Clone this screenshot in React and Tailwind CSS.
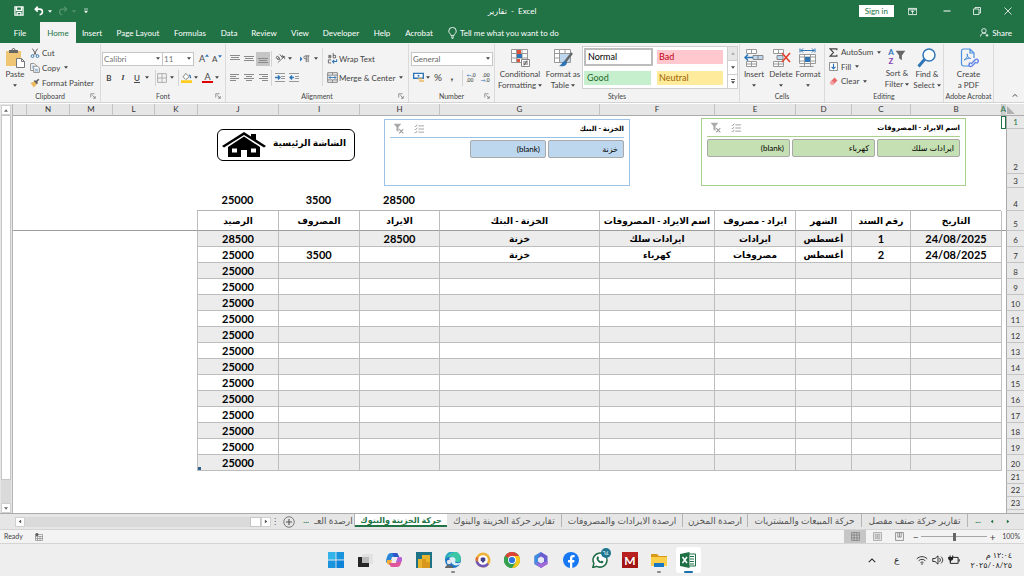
import { useState } from "react";

const COLUMNS = [
  { id: "A", width: "w-[5px]" },
  { id: "B", width: "w-[91px]", title: "التاريخ" },
  { id: "C", width: "w-[59px]", title: "رقم السند" },
  { id: "D", width: "w-[56px]", title: "الشهر" },
  { id: "E", width: "w-[81px]", title: "ايراد - مصروف" },
  { id: "F", width: "w-[115px]", title: "اسم الايراد - المصروفات" },
  { id: "G", width: "w-[160px]", title: "الخزنة - البنك" },
  { id: "H", width: "w-[80px]", title: "الايراد" },
  { id: "I", width: "w-[81px]", title: "المصروف" },
  { id: "J", width: "w-[81px]", title: "الرصيد" },
  { id: "K", width: "w-[43px]" },
  { id: "L", width: "w-[42px]" },
  { id: "M", width: "w-[43px]" },
  { id: "N", width: "w-[43px]" },
];

const FIELDS = ["B", "C", "D", "E", "F", "G", "H", "I", "J"];
const TEXT_FIELDS = ["D", "E", "F", "G"];

const entries = [
  { B: "24/08/2025", C: "1", D: "أغسطس", E: "ايرادات", F: "ايرادات سلك", G: "خزنة", H: "28500", J: "28500" },
  { B: "24/08/2025", C: "2", D: "أغسطس", E: "مصروفات", F: "كهرباء", G: "خزنة", I: "3500", J: "25000" },
];
while (entries.length < 15) entries.push({ J: "25000" });

const totals = { H: "28500", I: "3500", J: "25000" };

const ribbonTabs = [
  { name: "File", width: "w-10" },
  { name: "Home", width: "w-9" },
  { name: "Insert", width: "w-8" },
  { name: "Page Layout", width: "w-[60px]" },
  { name: "Formulas", width: "w-11" },
  { name: "Data", width: "w-[34px]" },
  { name: "Review", width: "w-9" },
  { name: "View", width: "w-9" },
  { name: "Developer", width: "w-[46px]" },
  { name: "Help", width: "w-9" },
  { name: "Acrobat", width: "w-[38px]" },
];

const sheets = [
  { name: "تقارير حركة صنف مفصل", width: "w-[106px]" },
  { name: "حركة المبيعات والمشتريات", width: "w-[114px]" },
  { name: "ارصدة المخزن", width: "w-[65px]" },
  { name: "ارصدة الايرادات والمصروفات", width: "w-[121px]" },
  { name: "تقارير حركة الخزينة والبنوك", width: "w-[115px]" },
  { name: "حركة الخزينة والبنوك", width: "w-[92px]", active: true },
  { name: "ارصدة العـ", width: "w-[42px]" },
];

function Caret({ className = "" }) {
  return (
    <svg viewBox="0 0 6 4" className={`h-[3px] w-1 shrink-0 ${className}`} aria-hidden="true">
      <path d="M0 0h6L3 4z" fill="currentColor" />
    </svg>
  );
}

function Icon({ box = "0 0 16 16", className = "size-3", children }) {
  return (
    <svg viewBox={box} className={`shrink-0 ${className}`} fill="none" stroke="currentColor" aria-hidden="true">
      {children}
    </svg>
  );
}

function Divider({ className = "" }) {
  return <span className={`h-4 w-px shrink-0 bg-[#d4d4d4] ${className}`} />;
}

function Group({ label, width, launcher, children }) {
  return (
    <section className={`flex shrink-0 flex-col border-r border-[#dadada] ${width}`} aria-label={label}>
      <div className="flex h-[46px]">{children}</div>
      <div className="relative h-3 text-center text-[7px] leading-3 whitespace-nowrap text-[#444]">
        {label}
        {launcher && (
          <button aria-label={`${label} settings`} className="absolute right-1 bottom-[3px]">
            <Icon box="0 0 8 8" className="size-[6px]">
              <path d="M1 6V1h5M3 3l4 4M7 4v3H4" stroke="#777" />
            </Icon>
          </button>
        )}
      </div>
    </section>
  );
}

function BigButton({ icon, lines, width, caret }) {
  return (
    <button className={`flex shrink-0 flex-col items-center pt-1 leading-[11px] whitespace-nowrap ${width}`}>
      <span className="mb-[2px] flex h-[19px] items-center">{icon}</span>
      {lines.map((line, i) => (
        <span key={line} className="flex items-center gap-[2px]">
          {line}
          {caret && lines.length > 1 && i === lines.length - 1 && <Caret />}
        </span>
      ))}
      {caret && lines.length === 1 && <Caret className="mt-1" />}
    </button>
  );
}

function SmallButton({ icon, label, caret, className = "" }) {
  return (
    <button className={`flex items-center whitespace-nowrap ${className}`}>
      <span className="flex w-3 shrink-0 items-center">{icon}</span>
      {label}
      {caret && <Caret className="ml-1" />}
    </button>
  );
}

function IconButton({ label, width = "w-[14px]", active, children }) {
  return (
    <button
      aria-label={label}
      className={`flex h-[14px] shrink-0 items-center justify-center ${width} ${active ? "bg-[#c5c5c5]" : ""}`}
    >
      {children}
    </button>
  );
}

function Lines({ d }) {
  return (
    <Icon box="0 0 10 10" className="size-[10px]">
      <path d={d} stroke="#8a8a8a" />
    </Icon>
  );
}

function TitleBar() {
  return (
    <header className="grid h-[22px] grid-cols-3 items-center">
      <div className="flex items-center pl-[14px]">
        <button aria-label="Save">
          <Icon className="size-[10px]">
            <path d="M1.500 1.500h13v13h-13zM4 2v5h8V2M5 14v-4h6v4" strokeWidth="2" />
          </Icon>
        </button>
        <button aria-label="Undo" className="ml-[10px] flex items-center gap-1">
          <Icon className="size-[10px]">
            <path d="M6 1 2 5l4 4M2 5h7c6 0 6 8 0 9" strokeWidth="2.500" />
          </Icon>
          <Caret />
        </button>
        <button aria-label="Redo" disabled className="ml-[6px] flex items-center gap-1 text-[#56936f]">
          <Icon className="size-[10px]">
            <path d="m10 1 4 4-4 4M14 5H7C1 5 1 13 7 14" strokeWidth="2" />
          </Icon>
          <Caret />
        </button>
        <button aria-label="Customize toolbar" className="ml-2">
          <Icon box="0 0 6 8" className="h-[6px] w-1">
            <path d="M0 1h6" />
            <path d="M0 3.500h6l-3 4z" fill="currentColor" stroke="none" />
          </Icon>
        </button>
      </div>
      <h1 className="text-center" dir="ltr">
        <bdi>تقارير</bdi>&nbsp; - &nbsp;Excel
      </h1>
      <div className="flex items-center justify-end">
        <button className="mr-[14px] h-3 bg-white px-[6px] leading-3 text-[#217346]">Sign in</button>
        <button aria-label="Ribbon display options" className="mr-[26px]">
          <Icon className="size-[9px]">
            <path d="M.500 2.500h15v11H.500zM.500 5h15M8 12V7M5.500 9 8 6.500 10.500 9" strokeWidth="1.500" />
          </Icon>
        </button>
        <button aria-label="Minimize" className="mr-[22px]">
          <Icon className="size-2"><path d="M1 8h14" strokeWidth="2" /></Icon>
        </button>
        <button aria-label="Restore" className="mr-[23px]">
          <Icon className="size-2"><path d="M1 4h11v11H1zM4 4V1h11v11h-3" strokeWidth="1.600" /></Icon>
        </button>
        <button aria-label="Close" className="mr-3">
          <Icon className="size-2"><path d="m1 1 14 14M15 1 1 15" strokeWidth="1.600" /></Icon>
        </button>
      </div>
    </header>
  );
}

function RibbonTabs({ tab, onSelect }) {
  return (
    <nav className="flex h-[21px] items-stretch">
      {ribbonTabs.map(({ name, width }) => (
        <button
          key={name}
          onClick={() => onSelect(name)}
          className={`shrink-0 whitespace-nowrap ${width} ${tab === name ? "bg-[#f3f3f3] text-[#217346]" : ""}`}
        >
          {name}
        </button>
      ))}
      <button className="ml-[10px] flex items-center gap-[3px] whitespace-nowrap">
        <Icon box="0 0 12 16" className="h-3 w-[9px]">
          <path d="M4 11.500c0-2.500-3-3-3-6a5 5 0 0 1 10 0c0 3-3 3.500-3 6zM4 13.500h4M5 15.500h2" strokeWidth="1.200" />
        </Icon>
        Tell me what you want to do
      </button>
      <button className="mr-3 ml-auto flex items-center gap-[3px]">
        <Icon className="size-[9px]">
          <circle cx="7" cy="5" r="4" strokeWidth="1.500" />
          <path d="M1 15c0-4 3-6 6-6 2 0 3 .5 4 2M10 13h5M12.500 10.500v5" strokeWidth="1.500" />
        </Icon>
        Share
      </button>
    </nav>
  );
}

function ClipboardGroup() {
  return (
    <Group label="Clipboard" width="w-[101px]" launcher>
      <BigButton
        width="w-[30px]"
        lines={["Paste"]}
        caret
        icon={
          <Icon box="0 0 20 20" className="size-5">
            <path d="M1 3h15v15H1z" fill="#f0c674" stroke="none" />
            <path d="M4 2h9v3H4z" fill="#666" stroke="none" />
            <path d="M7 2a1.500 1.500 0 0 1 3 0" stroke="#666" />
            <path d="M11.500 10.500h5l3 3v6h-8zM16.500 10.500v3h3" fill="#fff" stroke="#777" />
          </Icon>
        }
      />
      <div className="flex flex-col pt-[1px]">
        <SmallButton
          className="h-[15px]"
          label="Cut"
          icon={
            <Icon className="size-[10px]">
              <path d="M4 1l6 10M12 1 6 11" stroke="#555" strokeWidth="1.500" />
              <circle cx="4" cy="13" r="2.200" stroke="#2e75b6" strokeWidth="1.500" />
              <circle cx="12" cy="13" r="2.200" stroke="#2e75b6" strokeWidth="1.500" />
            </Icon>
          }
        />
        <SmallButton
          className="h-[15px]"
          label="Copy"
          caret
          icon={
            <Icon className="size-[10px]">
              <path d="M1 1h6l3 3v8H1z" fill="#fff" stroke="#777" strokeWidth="1.300" />
              <path d="M6 5h6l3 3v7H6z" fill="#fff" stroke="#777" strokeWidth="1.300" />
              <path d="M3 5h3M3 8h2M8 10h5M8 12.500h5" stroke="#2e75b6" />
            </Icon>
          }
        />
        <SmallButton
          className="h-[15px]"
          label="Format Painter"
          icon={
            <Icon className="size-[10px]">
              <path d="m1 8 6-3 4 5-5 5z" fill="#edb95e" stroke="none" />
              <path d="m7 4 5 5M10 6l4-4" stroke="#555" strokeWidth="2.500" />
            </Icon>
          }
        />
      </div>
    </Group>
  );
}

function FontGroup() {
  return (
    <Group label="Font" width="w-[125px]" launcher>
      <div className="pt-[5px] pl-[1px]">
        <div className="flex h-[19px] items-center">
          <span className="relative flex items-center">
            <select aria-label="Font name" className="h-[14px] w-[61px] appearance-none border border-[#c6c6c6] bg-white pl-[1px] text-[#777]">
              <option>Calibri</option>
            </select>
            <Caret className="pointer-events-none absolute right-[3px]" />
          </span>
          <span className="relative flex items-center">
            <select aria-label="Font size" className="-ml-px h-[14px] w-8 appearance-none border border-[#c6c6c6] bg-white pl-[1px] text-[#777]">
              <option>11</option>
            </select>
            <Caret className="pointer-events-none absolute right-[3px]" />
          </span>
          <button aria-label="Increase font size" className="ml-[5px] flex text-[9px]">
            A<Caret className="mt-[2px] rotate-180 text-[#2e75b6]" />
          </button>
          <button aria-label="Decrease font size" className="ml-[3px] flex text-[8px]">
            A<Caret className="mt-[2px] text-[#2e75b6]" />
          </button>
        </div>
        <div className="flex h-[19px] items-center">
          <IconButton label="Bold"><b>B</b></IconButton>
          <IconButton label="Italic"><i className="font-serif font-bold">I</i></IconButton>
          <IconButton label="Underline"><u className="font-semibold">U</u></IconButton>
          <Caret className="mr-[6px] ml-[1px]" />
          <Divider />
          <IconButton label="Borders" width="w-3">
            <Icon className="size-[10px]"><path d="M1 1h14v14H1zM8 1v14M1 8h14" stroke="#aaa" strokeWidth="1.500" /></Icon>
          </IconButton>
          <Caret className="mr-1 ml-[2px]" />
          <Divider />
          <IconButton label="Fill color">
            <Icon className="size-[11px]">
              <path d="m7 2 5 5-5 4-4-4z" fill="#fff" stroke="#777" strokeWidth="1.300" />
              <path d="M12 4c2 1 2 3 2 5" stroke="#2e75b6" strokeWidth="1.800" />
              <path d="M0 12h16v4H0z" fill="#ffcc1f" stroke="none" />
            </Icon>
          </IconButton>
          <Caret className="mr-1 ml-[1px]" />
          <button aria-label="Font color" className="w-[11px] border-b-2 border-[#e00000] text-[9px] leading-[9px]">A</button>
          <Caret className="ml-[2px]" />
        </div>
      </div>
    </Group>
  );
}

function AlignmentGroup() {
  return (
    <Group label="Alignment" width="w-[183px]" launcher>
      <div className="flex flex-col pt-[5px] pl-[2px]">
        <div className="flex h-[19px] items-center">
          <IconButton label="Top align"><Lines d="M0 1.500h10M1 3.500h8M0 5.500h10" /></IconButton>
          <IconButton label="Middle align"><Lines d="M0 2.500h10M1 4.500h8M0 6.500h10" /></IconButton>
          <IconButton label="Bottom align" active><Lines d="M0 4.500h10M1 6.500h8M0 8.500h10" /></IconButton>
          <Divider className="mx-[1px]" />
          <IconButton label="Orientation">
            <Icon className="size-[11px]">
              <path d="M4 14 14 5M14 5v4M14 5h-4" stroke="#777" strokeWidth="1.300" />
              <path d="M2 8c-1-4 3-4 4-1l1 3M6 7c-4 0-3 4 0 2M7 2l4 5c2 0 2-4-1-3" stroke="#555" strokeWidth="1.300" />
            </Icon>
          </IconButton>
          <Caret className="mr-[6px] ml-[1px]" />
          <IconButton label="Text direction">
            <Icon className="size-[10px]">
              <path d="m0 4 4 4-4 4z" fill="#2e75b6" stroke="none" />
              <path d="M10 13V3M13 13V3M15 3H9c-4 0-4 5 1 5" stroke="#666" strokeWidth="1.500" />
            </Icon>
          </IconButton>
          <Caret className="mr-1 ml-[2px]" />
        </div>
        <div className="flex h-[19px] items-center">
          <IconButton label="Align left"><Lines d="M0 1.500h9M0 3.500h6M0 5.500h9M0 7.500h6" /></IconButton>
          <IconButton label="Center"><Lines d="M0 1.500h10M2 3.500h6M0 5.500h10M2 7.500h6" /></IconButton>
          <IconButton label="Align right"><Lines d="M1 1.500h9M4 3.500h6M1 5.500h9M4 7.500h6" /></IconButton>
          <Divider className="mx-[1px]" />
          <IconButton label="Increase indent">
            <Icon box="0 0 10 10" className="size-[10px]">
              <path d="M0 .500h10M6 3.500h4M6 5.500h4M0 8.500h10" stroke="#999" />
              <path d="M0 4.500h4M3 2.500l2 2-2 2" stroke="#2e75b6" strokeWidth="1.300" />
            </Icon>
          </IconButton>
          <IconButton label="Decrease indent">
            <Icon box="0 0 10 10" className="size-[10px]">
              <path d="M0 .500h10M6 3.500h4M6 5.500h4M0 8.500h10" stroke="#999" />
              <path d="M1 4.500h4M3 2.500l-2 2 2 2" stroke="#2e75b6" strokeWidth="1.300" />
            </Icon>
          </IconButton>
        </div>
      </div>
      <div className="my-1 w-px bg-[#d9d9d9]" />
      <div className="flex flex-col pt-[5px] pl-1">
        <SmallButton
          className="h-[19px]"
          label="Wrap Text"
          icon={
            <Icon className="size-[11px]">
              <path d="M2 3.500h3.500v3.500H2.500V5h3M9 0v7h3.500V3.500H9M6 10H2v4.500h4" stroke="#555" strokeWidth="1.200" />
              <path d="M14 9v3.500H8M10.500 10 8 12.500l2.500 2.500" stroke="#2e75b6" strokeWidth="1.500" />
            </Icon>
          }
        />
        <SmallButton
          className="h-[19px]"
          label="Merge & Center"
          caret
          icon={
            <Icon className="size-[11px]">
              <path d="M1 1h14v14H1zM1 4.500h14M1 11.500h14M8 1v3M8 12v3" stroke="#777" strokeWidth="1.300" />
              <path d="M3 8h10M5 6 3 8l2 2M11 6l2 2-2 2" stroke="#2e75b6" strokeWidth="1.300" />
            </Icon>
          }
        />
      </div>
    </Group>
  );
}

function NumberGroup() {
  return (
    <Group label="Number" width="w-[86px]" launcher>
      <div className="pt-[5px] pl-[2px]">
        <div className="relative flex h-[19px] w-[82px] items-center">
          <select aria-label="Number format" className="h-[14px] w-full appearance-none border border-[#c6c6c6] bg-white pl-[1px] text-[#666]">
            <option>General</option>
          </select>
          <Caret className="pointer-events-none absolute right-[3px]" />
        </div>
        <div className="flex h-[19px] items-center">
          <IconButton label="Currency">
            <Icon className="size-[11px]">
              <path d="M1 2h14v7H1z" fill="#fff" stroke="#2e75b6" strokeWidth="2" />
              <circle cx="8" cy="5.500" r="1.500" fill="#2e75b6" stroke="none" />
              <path d="M7 9h7v2H7zM9 12h7v2H9z" fill="#edb95e" stroke="none" />
            </Icon>
          </IconButton>
          <Caret className="mx-[1px]" />
          <IconButton label="Percent"><span className="text-[10px]">%</span></IconButton>
          <IconButton label="Comma"><b className="pb-1 text-[12px] leading-none">,</b></IconButton>
          <Divider className="mr-[1px] ml-[3px]" />
          <IconButton label="Increase decimal">
            <span className="text-left text-[5px] leading-[5px] font-semibold"><span className="text-[#2e75b6]">←</span>.0<br />.00</span>
          </IconButton>
          <IconButton label="Decrease decimal">
            <span className="text-right text-[5px] leading-[5px] font-semibold">.00<br /><span className="text-[#2e75b6]">→</span>.0</span>
          </IconButton>
        </div>
      </div>
    </Group>
  );
}

function GridIcon({ children }) {
  return (
    <Icon box="0 0 20 20" className="size-5">
      <path d="M1.500 1.500h16v13h-16zM1.500 5.500h16M1.500 10h16M6.500 1.500v13M12 1.500v13" fill="#fff" stroke="#999" />
      {children}
    </Icon>
  );
}

function StylesGroup() {
  return (
    <Group label="Styles" width="w-[245px]">
      <BigButton
        width="w-[50px]"
        lines={["Conditional", "Formatting"]}
        caret
        icon={
          <GridIcon>
            <path d="M7 2h4v4H7zM7 11h3v3H7z" fill="#e0523a" stroke="none" />
            <path d="M7 6h5v4H7z" fill="#2e75b6" stroke="none" />
            <path d="M11.500 11.500h8v7h-8z" fill="#fff" stroke="#888" />
            <path d="M13 14h5M13 16h5M17 12.500l-3 5" stroke="#444" strokeWidth=".800" />
          </GridIcon>
        }
      />
      <BigButton
        width="w-[36px]"
        lines={["Format as", "Table"]}
        caret
        icon={
          <GridIcon>
            <path d="M7 6h10v8H7z" fill="#bdd7ee" stroke="none" />
            <path d="m19 5-7 9" stroke="#666" strokeWidth="2.500" />
            <path d="M12 13c-3 0-3 4-6 5 4 1 8 0 8-4z" fill="#2e75b6" stroke="none" />
          </GridIcon>
        }
      />
      <div className="mt-[2px] ml-[1px] flex h-[43px] border border-[#cfcfcf] bg-white">
        <div className="grid grid-cols-2 grid-rows-2 gap-x-1 gap-y-[3px] px-[1px] py-[1px] text-[9px]">
          <button className="w-[69px] border-2 border-[#bdbdbd] bg-white pl-[2px] text-left text-black">Normal</button>
          <button className="my-[2px] w-[66px] bg-[#ffc7ce] pl-[2px] text-left text-[#c00010]">Bad</button>
          <button className="my-[2px] w-[67px] bg-[#c6efce] pl-[3px] text-left text-[#1c6b2a]">Good</button>
          <button className="my-[2px] w-[66px] bg-[#ffeb9c] pl-[2px] text-left text-[#9c6500]">Neutral</button>
        </div>
        <div className="flex w-[10px] flex-col divide-y divide-[#cfcfcf] border-l border-[#cfcfcf]">
          <button aria-label="Scroll styles up" className="flex flex-1 items-center justify-center bg-[#e6e6e6] text-[#aaa]"><Caret className="rotate-180" /></button>
          <button aria-label="Scroll styles down" className="flex flex-1 items-center justify-center"><Caret /></button>
          <button aria-label="More styles" className="flex flex-1 flex-col items-center justify-center gap-px">
            <span className="h-px w-1 bg-[#555]" />
            <Caret />
          </button>
        </div>
      </div>
    </Group>
  );
}

function CellsGroup() {
  return (
    <Group label="Cells" width="w-[85px]">
      <BigButton
        width="w-[28px]"
        lines={["Insert"]}
        caret
        icon={
          <Icon box="0 0 20 20" className="size-5">
            <path d="M2.500 1.500h10v4h-10zM7.500 1.500v4M2.500 13.500h10v5h-10zM7.500 13.500v5M2.500 16h10" fill="#fff" stroke="#999" />
            <path d="M9 7.500h10v4H9zM14 7.500v4" fill="#bdd7ee" stroke="#888" />
            <path d="M1 9.500h8M4 6.500l-3 3 3 3" stroke="#2e75b6" strokeWidth="1.500" />
          </Icon>
        }
      />
      <BigButton
        width="w-[26px]"
        lines={["Delete"]}
        caret
        icon={
          <Icon box="0 0 20 20" className="size-5">
            <path d="M2.500 1.500h10v4h-10zM7.500 1.500v4M2.500 13.500h10v5h-10zM7.500 13.500v5M2.500 16h10" fill="#fff" stroke="#999" />
            <path d="M6 7.500h6v4H6z" fill="#bdd7ee" stroke="#888" />
            <path d="m11 5 8 9M19 5l-8 9" stroke="#e0402a" strokeWidth="1.600" />
          </Icon>
        }
      />
      <BigButton
        width="w-[28px]"
        lines={["Format"]}
        caret
        icon={
          <Icon box="0 0 20 20" className="size-5">
            <path d="M2 .500v4M17 .500v4M3 2.500h13M5 .500l-2 2 2 2M14 .500l2 2-2 2" stroke="#2e75b6" />
            <path d="M1.500 6.500h16v9h-16zM1.500 9h16M1.500 13h16M6.500 6.500v12M12.500 6.500v12M1.500 18.500h14" fill="#fff" stroke="#999" />
            <path d="M7 9h5v5H7z" fill="#2e75b6" stroke="none" />
          </Icon>
        }
      />
    </Group>
  );
}

function EditingGroup() {
  return (
    <Group label="Editing" width="w-[119px]">
      <div className="flex w-[57px] shrink-0 flex-col pt-[1px] pl-1">
        <SmallButton
          className="h-[14px]"
          label="AutoSum"
          caret
          icon={<Icon className="size-[9px]"><path d="M14 4V1.500H2L8 8l-6 6.500h12V12" stroke="#444" strokeWidth="2" /></Icon>}
        />
        <SmallButton
          className="h-[15px]"
          label="Fill"
          caret
          icon={
            <Icon className="size-[9px]">
              <path d="M1 1h14v14H1z" fill="#fff" stroke="#777" strokeWidth="1.500" />
              <path d="M8 3v9M4.500 8.500 8 12l3.500-3.500" stroke="#2e75b6" strokeWidth="2" />
            </Icon>
          }
        />
        <SmallButton
          className="h-[14px]"
          label="Clear"
          caret
          icon={
            <Icon className="size-[9px]">
              <path d="m10 1 5 5-8 8-5-5z" fill="#e8696b" stroke="none" />
              <path d="m5 6 5 5-3 3H4l-3-3z" fill="#f3a5a5" stroke="none" />
            </Icon>
          }
        />
      </div>
      <BigButton
        width="w-[30px]"
        lines={["Sort &", "Filter"]}
        caret
        icon={
          <span className="flex items-center gap-[1px]">
            <span className="flex flex-col text-[8px] leading-[9px] font-bold text-[#2e75b6]">
              <span>A</span>
              <span className="text-[#8a3fb5]">Z</span>
            </span>
            <Icon className="mb-1 size-[11px]"><path d="M1 1h14l-5 7v7l-4-3V8z" fill="#666" stroke="none" /></Icon>
          </span>
        }
      />
      <BigButton
        width="w-[30px]"
        lines={["Find &", "Select"]}
        caret
        icon={
          <Icon box="0 0 20 20" className="size-5">
            <circle cx="12" cy="7" r="6" fill="#fff" stroke="#2e75b6" strokeWidth="1.500" />
            <path d="m7.500 11.500-6 7" stroke="#2e75b6" strokeWidth="3" />
          </Icon>
        }
      />
    </Group>
  );
}

function Ribbon() {
  return (
    <div className="flex h-[60px] shrink-0 border-b border-[#d2d2d2] bg-[#f3f3f3] pt-[1px] text-[#444]">
      <ClipboardGroup />
      <FontGroup />
      <AlignmentGroup />
      <NumberGroup />
      <StylesGroup />
      <CellsGroup />
      <EditingGroup />
      <Group label="Adobe Acrobat" width="w-[50px]">
        <BigButton
          width="w-full"
          lines={["Create", "a PDF"]}
          icon={
            <Icon box="0 0 20 20" className="size-5">
              <path d="M10 18H4.500a2 2 0 0 1-2-2V3a2 2 0 0 1 2-2H11l4 4v5M11 1v4h4" stroke="#4a90e2" strokeWidth="1.200" />
              <path d="M5 12c3-1 4-5 3.500-6S7 8 11 10.500c2 .5 0-1.500-6 1.500" stroke="#4a90e2" />
              <path d="m12 16 4-4c2-2 4.500.5 2.500 2.500l-1 1M17 14l-4 4c-2 1.500-4-.5-2.500-2.500l1-1" stroke="#5b7fe8" strokeWidth="1.300" />
            </Icon>
          }
        />
      </Group>
      <button aria-label="Collapse ribbon" className="mt-auto mr-[6px] mb-1 ml-auto">
        <Icon box="0 0 8 5" className="h-[5px] w-[6px]"><path d="m1 4 3-3 3 3" strokeWidth="1.300" /></Icon>
      </button>
    </div>
  );
}

function VerticalScroll() {
  return (
    <div className="flex w-[13px] shrink-0 flex-col items-center border-r border-[#b5b5b5] bg-[#e6e6e6] pt-px">
      <button aria-label="Scroll up" className="flex size-[10px] items-center justify-center border border-[#cfcfcf] bg-white text-[#666]">
        <Caret className="rotate-180" />
      </button>
      <div className="w-[10px] flex-1 bg-[#dadada]">
        <div className="h-[94%] border border-[#c6c6c6] bg-white" />
      </div>
      <button aria-label="Scroll down" className="flex size-[10px] items-center justify-center border border-[#cfcfcf] bg-white text-[#666]">
        <Caret />
      </button>
    </div>
  );
}

function RowNumber({ n, className = "" }) {
  return (
    <th
      scope="row"
      className={`border-b border-l border-[#c3c3c3] border-l-[#ababab] bg-[#e8e8e8] p-0 text-center align-bottom text-[8px] leading-[11px] font-normal text-[#333] ${className}`}
    >
      {n}
    </th>
  );
}

function EmptyRow({ n, height }) {
  return (
    <tr className={height}>
      <RowNumber n={n} />
      <td className="p-0" colSpan={15} />
    </tr>
  );
}

function Grid() {
  return (
    <table dir="rtl" className="w-full table-fixed border-separate border-spacing-0 text-black">
      <colgroup>
        <col className="w-[18px]" />
        {COLUMNS.map((c) => <col key={c.id} className={c.width} />)}
        <col />
      </colgroup>
      <thead>
        <tr className="h-3 bg-[#e6e6e6] text-[8px] leading-[11px] text-[#333]">
          <td className="border-b border-[#ababab] p-0">
            <svg viewBox="0 0 8 8" className="mr-[9px] size-2" aria-hidden="true"><path d="M0 0v8h8z" fill="#b1b1b1" /></svg>
          </td>
          {COLUMNS.map((c) => (
            <th
              key={c.id}
              scope="col"
              className={`border-b border-l border-[#ababab] border-l-[#c3c3c3] p-0 font-normal ${c.id === "A" ? "bg-[#cfcfcf] text-[#217346]" : ""}`}
            >
              {c.id}
            </th>
          ))}
          <td className="border-b border-[#ababab] p-0" />
        </tr>
      </thead>
      <tbody>
        <tr className="h-[13px]">
          <RowNumber n={1} className="text-[#217346]" />
          <td className="border border-[#217346] p-0" />
          <td className="p-0" colSpan={14} />
        </tr>
        <EmptyRow n={2} height="h-[45px]" />
        <EmptyRow n={3} height="h-[14px]" />
        <tr className="h-[23px] text-[11px] leading-none font-bold">
          <RowNumber n={4} />
          <td className="p-0" />
          {FIELDS.map((f) => (
            <td key={f} className="border-b border-[#b4b4b4] p-0 text-center">{totals[f]}</td>
          ))}
          <td className="p-0" colSpan={5} />
        </tr>
        <tr className="h-5 text-[9px] leading-none">
          <RowNumber n={5} />
          <td className="border-b border-l border-[#9c9c9c] border-l-[#c0c0c0] p-0" />
          {COLUMNS.filter((c) => c.title).map((c) => (
            <th key={c.id} scope="col" className="border-b border-l border-[#9c9c9c] border-l-[#bdbdbd] p-0 font-bold whitespace-nowrap">
              {c.title}
            </th>
          ))}
          <td className="border-b border-[#9c9c9c] p-0" colSpan={5} />
        </tr>
        {entries.map((entry, i) => (
          <tr key={i} className="h-4 leading-none font-bold">
            <RowNumber n={i + 6} />
            <td className="border-l border-[#c0c0c0] p-0" />
            {FIELDS.map((f) => (
              <td
                key={f}
                className={`relative border-b border-l border-[#bdbdbd] p-0 text-center whitespace-nowrap ${
                  TEXT_FIELDS.includes(f) ? "text-[9px]" : "text-[11px]"
                } ${i % 2 === 0 ? "bg-[#ececec]" : ""}`}
              >
                {entry[f]}
                {i === entries.length - 1 && f === "J" && (
                  <span className="absolute bottom-0 left-0 size-[3px] bg-[#2f5f8f]" />
                )}
              </td>
            ))}
            <td className="p-0" colSpan={5} />
          </tr>
        ))}
        <EmptyRow n={21} height="h-[13px]" />
        <EmptyRow n={22} height="h-[13px]" />
        <EmptyRow n={23} height="h-[13px]" />
        <EmptyRow n={24} height="h-[13px]" />
      </tbody>
    </table>
  );
}

function Slicer({ title, items, place, border, fill, itemWidth }) {
  return (
    <section dir="rtl" className={`absolute flex flex-col border bg-white px-[5px] ${place} ${border}`}>
      <div className={`flex h-[18px] items-center border-b ${border}`}>
        <h2 className="text-[7px] font-bold whitespace-nowrap">{title}</h2>
        <button aria-label="Multi select" className="mr-auto ml-[10px] text-[#999]">
          <Icon className="size-[10px]">
            <path d="m1 3 1.500 1.500L5 1M1 8l1.500 1.500L5 6M1 13l1.500 1.500L5 11M7 3h9M7 8h9M7 13h9" strokeWidth="1.400" />
          </Icon>
        </button>
        <button aria-label="Clear filter" className="ml-[3px] text-[#999]">
          <Icon className="size-[11px]">
            <path d="M1 1h11L8 6v7l-3-2V6z" fill="#aaa" stroke="none" />
            <path d="m9 9 6 6M15 9l-6 6" strokeWidth="1.500" />
          </Icon>
        </button>
      </div>
      <div className="mt-[2px] flex gap-[2px]">
        {items.map((item) => (
          <button
            key={item}
            className={`h-[18px] rounded-[2px] border border-[#a9a9a9] pr-[5px] text-start text-[8px] whitespace-nowrap text-black ${itemWidth} ${fill}`}
          >
            <bdi>{item}</bdi>
          </button>
        ))}
      </div>
    </section>
  );
}

function Sheet() {
  return (
    <main className="flex min-h-0 flex-1 bg-white pt-px">
      <VerticalScroll />
      <div className="relative min-w-0 flex-1 overflow-hidden">
        <Grid />
        <a
          href="#home"
          dir="rtl"
          className="absolute top-[25px] right-[669px] flex h-8 w-[138px] items-center justify-between rounded-[6px] border border-black bg-white pr-2 pl-1 text-[9px] font-bold whitespace-nowrap text-black"
        >
          <span className="pb-1">الشاشة الرئيسية</span>
          <svg viewBox="0 0 44 26" className="h-[26px] w-11" aria-hidden="true">
            <path d="M0 14 22 0l7 4.500V2h5v5.500L44 14l-2 1.500L22 3 2 15.500z" />
            <path d="M22 4.500 6 15v10h13v-7h6v7h13V15z" />
            <path d="M10 16.500h5v4h-5zM29 16.500h5v4h-5z" fill="#fff" />
          </svg>
        </a>
        <Slicer
          title="الخزنة - البنك"
          items={["خزنة", "(blank)"]}
          place="top-[15px] right-[394px] h-[67px] w-[246px]"
          border="border-[#9cc3e6]"
          fill="bg-[#bdd7ee]"
          itemWidth="w-[76px]"
        />
        <Slicer
          title="اسم الايراد - المصروفات"
          items={["ايرادات سلك", "كهرباء", "(blank)"]}
          place="top-[14px] right-[58px] h-[68px] w-[265px]"
          border="border-[#a9d18e]"
          fill="bg-[#c5e0b3]"
          itemWidth="flex-1"
        />
      </div>
    </main>
  );
}

function SheetTabs() {
  return (
    <div className="flex h-4 shrink-0 items-stretch border-t border-[#ababab] bg-[#e6e6e6] text-[#555]">
      <div className="flex w-[261px] shrink-0 items-center pl-[15px]">
        <button aria-label="Scroll left" className="flex size-[10px] shrink-0 items-center justify-center border border-[#cfcfcf] bg-white">
          <Caret className="rotate-90" />
        </button>
        <div className="flex h-[10px] flex-1 justify-end bg-[#dadada]">
          <div className="w-[11px] border border-[#c6c6c6] bg-white" />
        </div>
      </div>
      <button aria-label="Scroll right" className="my-auto flex size-[10px] shrink-0 items-center justify-center border border-[#cfcfcf] bg-white">
        <Caret className="-rotate-90" />
      </button>
      <span className="w-2 text-center leading-[14px]">⋮</span>
      <button aria-label="New sheet" className="my-auto ml-1 shrink-0">
        <Icon className="size-3"><circle cx="8" cy="8" r="7" /><path d="M8 4v8M4 8h8" strokeWidth="1.500" /></Icon>
      </button>
      <span className="ml-auto font-bold text-[#217346]">...</span>
      <div dir="rtl" className="ml-1 flex">
        {sheets.map((s) => (
          <button
            key={s.name}
            className={`mb-[2px] shrink-0 leading-3 whitespace-nowrap ${s.width} ${
              s.active ? "border-b-2 border-[#217346] bg-white text-[8px] font-bold text-[#217346]" : "border-r border-[#b5b5b5] text-[9px]"
            }`}
          >
            {s.name}
          </button>
        ))}
      </div>
      <span className="ml-1 w-3 text-center font-bold text-[#217346]">...</span>
      <button aria-label="Previous sheet" className="w-4 text-[#217346]"><Caret className="mx-auto rotate-90" /></button>
      <button aria-label="Next sheet" className="mr-2 w-4 text-[#217346]"><Caret className="mx-auto -rotate-90" /></button>
    </div>
  );
}

function StatusBar() {
  return (
    <div className="flex h-[15px] shrink-0 items-center border-y border-[#d4d4d4] bg-[#f3f3f3] pl-1 text-[7px] text-[#444]">
      <span>Ready</span>
      <button aria-label="Record macro" className="ml-3">
        <Icon className="size-2">
          <path d="M1 3h14v12H1zM1 7h14M5 7v8M10 7v8M1 11h14" stroke="#666" />
          <circle cx="4" cy="3" r="3" fill="#555" stroke="none" />
        </Icon>
      </button>
      <button aria-label="Normal view" className="ml-auto flex h-[13px] w-[22px] items-center justify-center bg-[#c6c6c6]">
        <Icon className="size-[9px]"><path d="M1 1h14v14H1zM1 5.500h14M1 10.500h14M5.500 1v14M10.500 1v14" stroke="#666" /></Icon>
      </button>
      <button aria-label="Page layout view" className="flex w-[22px] justify-center">
        <Icon className="size-[9px]"><path d="M1 1h14v14H1zM4 4h8v8H4zM6 6h4M6 8h4M6 10h4" stroke="#777" /></Icon>
      </button>
      <button aria-label="Page break view" className="flex w-[22px] justify-center">
        <Icon className="size-[9px]"><path d="M1 1h14v14H1zM5 1v8h6V1M8 1v8" stroke="#777" strokeWidth="1.300" /></Icon>
      </button>
      <button aria-label="Zoom out" className="w-[11px] text-[10px] leading-none">−</button>
      <input
        type="range"
        aria-label="Zoom"
        min="10"
        max="190"
        defaultValue="100"
        className="h-2 w-[66px] appearance-none bg-[linear-gradient(#a6a6a6,#a6a6a6)] bg-[length:100%_1px] bg-center bg-no-repeat [&::-webkit-slider-thumb]:h-2 [&::-webkit-slider-thumb]:w-[3px] [&::-webkit-slider-thumb]:appearance-none [&::-webkit-slider-thumb]:bg-[#666]"
      />
      <button aria-label="Zoom in" className="w-[11px] text-[10px] leading-none">+</button>
      <span className="mr-1 ml-1">100%</span>
    </div>
  );
}

const taskbarApps = [
  {
    name: "Start",
    art: (
      <>
        <path d="M0 0h7.600v7.600H0z" fill="#35b4ea" />
        <path d="M8.400 0H16v7.600H8.400zM0 8.400h7.600V16H0z" fill="#1a94dc" />
        <path d="M8.400 8.400H16V16H8.400z" fill="#0f83d8" />
      </>
    ),
  },
  {
    name: "Task view",
    art: (
      <>
        <path d="M5 2h11v10H5z" fill="#e2e2e2" />
        <path d="M1 5h11v10H1z" fill="#262626" />
        <path d="M5 5h7v6H5z" fill="#bbb" />
      </>
    ),
  },
  {
    name: "Copilot",
    art: (
      <>
        <path d="M5 1h5c2 0 2 2 3 4H6L4 11H2C-1 11 0 8 1 5s2-4 4-4z" fill="#2a86d8" />
        <path d="M6 1h4c2 0 2 2 3 4H9C7 5 7 1 6 1z" fill="#2f55c8" />
        <path d="M1 8h5l-1 5c-3 0-5-1-4-5z" fill="#f0b13c" />
        <path d="M11 15H6c-2 0-2-2-3-4h7l2-6h2c3 0 2 3 1 6s-2 4-4 4z" fill="#e0569a" />
        <path d="M12 5h2c3 0 2 3 1 5h-5z" fill="#b162d9" />
        <path d="M7 6h3L8.500 10H5.500z" fill="#eee" />
      </>
    ),
  },
  {
    name: "Reports",
    art: (
      <>
        <path d="M0 0h16v16H0z" fill="#1e7286" />
        <path d="M2 7h4v9H2zM6 3h8v7H6z" fill="#e8b42c" />
        <path d="M6 7h4v9H6zM10 10h4v6h-4z" fill="#d8961d" />
      </>
    ),
  },
  {
    name: "Edge",
    running: "bg-[#888]",
    art: (
      <>
        <circle cx="8" cy="8" r="8" fill="#1b74c5" />
        <path d="M0 7a8 8 0 0 1 16 0c0 4-5 4-6 2 1-4-6-6-10-2z" fill="#3ec7a6" />
        <path d="M0 7a8 8 0 0 1 9-7C4 2 2 4 0 7z" fill="#2a9ad8" />
        <path d="M4 6c5-3 8 1 6 4 1 2 5 1 6 0-1 4-8 5-10 0z" fill="#d9eef8" />
        <circle cx="4" cy="10" r="2.200" fill="#e6e6e6" />
        <path d="M0 16c0-4 8-4 8 0z" fill="#666" />
      </>
    ),
  },
  {
    name: "Secure browser",
    art: (
      <>
        <circle cx="8" cy="8" r="7.500" fill="#efb23a" />
        <path d="M.500 8A7.500 7.500 0 0 0 14 12.500L10 9l-5 2z" fill="#6f58b8" />
        <path d="M1 5a7.500 7.500 0 0 0-.5 3L5 10V6z" fill="#e46d3c" />
        <circle cx="8" cy="8" r="4.800" fill="#fff" />
        <path d="M8 5.200 10.300 6v2.500L8 11 5.700 8.500V6z" fill="#44428c" />
      </>
    ),
  },
  {
    name: "Chrome",
    art: (
      <>
        <circle cx="8" cy="8" r="8" fill="#34a04f" />
        <path d="M8 8 1.100 4A8 8 0 0 1 15 4z" fill="#dd4436" />
        <path d="M8 16a8 8 0 0 0 7-12H8z" fill="#f8c81c" />
        <path d="m8 16 4-6-4-2-3 2-4-6a8 8 0 0 0 7 12z" fill="#34a04f" />
        <circle cx="8" cy="8" r="4" fill="#fff" />
        <circle cx="8" cy="8" r="3.100" fill="#2d74e0" />
      </>
    ),
  },
  {
    name: "Microsoft 365",
    art: (
      <>
        <path d="m8 0 6.500 4v8L8 16l-6.500-4V4z" fill="#6a5fd0" />
        <path d="M8 0 1.500 4v8L5 14V6z" fill="#3b8ede" />
        <path d="M1.500 10 8 16l6.500-4V9L8 12z" fill="#a06ad8" />
        <path d="m8 4.500 3 1.700v3.600l-3 1.700-3-1.700V6.200z" fill="#e8e8f3" />
      </>
    ),
  },
  {
    name: "Facebook",
    art: (
      <>
        <circle cx="8" cy="8" r="8" fill="#1877f2" />
        <path d="M7 16v-5.500H5V8h2V6.300C7 4 8.300 3 10 3h1.600v2.200h-1c-1 0-1.300.5-1.300 1.300V8h2.200l-.4 2.500H9.300V16z" fill="#fff" />
      </>
    ),
  },
  {
    name: "WhatsApp",
    badge: "٦٤",
    art: (
      <>
        <path d="m.800 15.500 1.100-4A7 7 0 1 1 4.800 14.300z" fill="#fff" stroke="#1f6b45" strokeWidth="1.500" />
        <path d="M5 5c1-1.500 1.500 0 2 1l-.6 1.200c.6 1 1.400 1.800 2.400 2.300l1-1c1 .5 2.500 1 1.200 2.200C8.500 13 3 8 5 5z" fill="#1f6b45" />
      </>
    ),
  },
  {
    name: "MEGA",
    art: (
      <>
        <path d="M0 0h16v16H0z" fill="#a31515" />
        <path d="M0 0h16v6H0z" fill="#b92020" />
        <text x="8" y="12.500" textAnchor="middle" fontSize="12" fontWeight="700" fill="#fff">M</text>
      </>
    ),
  },
  {
    name: "File Explorer",
    running: "bg-[#888]",
    art: (
      <>
        <path d="M0 2h6l2 2h8v3H0z" fill="#d99a1c" />
        <path d="M0 5h16v9H0z" fill="#fbcf4a" />
        <path d="M3 11h10v4H3z" fill="#1777c4" />
      </>
    ),
  },
  {
    name: "Excel",
    running: "bg-[#1a6fae]",
    current: true,
    art: (
      <>
        <path d="M8 2h7.500v12H8z" fill="#fff" stroke="#1f7145" />
        <path d="M10 4.500h4M10 7h4M10 9.500h4M10 12h4" stroke="#1f7145" strokeWidth="1.200" />
        <path d="m0 2 9.500-2v16L0 14z" fill="#1f7145" />
        <path d="m2.500 5 4.500 6M7 5l-4.500 6" stroke="#fff" strokeWidth="1.500" />
      </>
    ),
  },
];

function Taskbar() {
  return (
    <footer className="grid h-8 shrink-0 grid-cols-[1fr_378px_1fr] items-center bg-[#eeeeee] text-[#222]">
      <span />
      <div className="flex justify-between">
        {taskbarApps.map((app) => (
          <button
            key={app.name}
            aria-label={app.name}
            className={`relative flex h-[26px] w-[25px] items-center justify-center rounded-[3px] ${app.current ? "bg-white" : ""}`}
          >
            <svg viewBox="0 0 16 16" className="size-4" aria-hidden="true">{app.art}</svg>
            {app.badge && (
              <span className="absolute top-[1px] right-[2px] flex size-[10px] items-center justify-center rounded-full bg-[#1d7791] text-[6px] leading-none text-white">
                {app.badge}
              </span>
            )}
            {app.running && (
              <span className={`absolute bottom-0 h-[2px] rounded-full ${app.current ? "w-[9px]" : "w-1"} ${app.running}`} />
            )}
          </button>
        ))}
      </div>
      <div className="flex items-center justify-end pr-3">
        <button aria-label="Hidden icons" className="mr-[18px]">
          <Icon box="0 0 10 6" className="h-[5px] w-2"><path d="m1 5 4-4 4 4" strokeWidth="1.300" /></Icon>
        </button>
        <button aria-label="Keyboard language" className="mr-[17px] text-[9px]">ع</button>
        <button aria-label="Network, volume and battery" className="mr-[10px] flex items-center gap-1">
          <Icon className="size-3">
            <path d="M1 6.500c4-4 10-4 14 0M3.500 9c2.500-2.500 6.500-2.500 9 0M6 11.500c1-1 3-1 4 0" strokeWidth="1.200" />
            <circle cx="8" cy="13.300" r="1" fill="currentColor" stroke="none" />
          </Icon>
          <Icon className="size-3">
            <path d="M1 6h3l4-3.500v11L4 10H1zM10 5.500c1.500 1.500 1.500 3.500 0 5M12 3.500c3 3 3 6 0 9" strokeWidth="1.200" />
          </Icon>
          <Icon className="size-3">
            <path d="M5 4.500h8.500v8H3V9M15 7v3" strokeWidth="1.300" />
            <path d="M0 4h2V2h1.500v2h2V2H7v3c0 3-1.500 4-3 4v2H2.500V9C1 8.500 0 7 0 4z" fill="currentColor" stroke="none" />
          </Icon>
        </button>
        <div dir="rtl" className="text-right text-[8px] leading-[10px] whitespace-nowrap">
          <div>١٢:٠٤ م</div>
          <div>٢٠٢٥/٠٨/٢٥</div>
        </div>
      </div>
    </footer>
  );
}

export default function App() {
  const [tab, setTab] = useState("Home");

  return (
    <div className="flex h-screen flex-col overflow-hidden bg-[#e6e6e6] font-['Lato','DejaVu_Sans',sans-serif] text-[8px]">
      <div className="shrink-0 bg-[#217346] text-white">
        <TitleBar />
        <RibbonTabs tab={tab} onSelect={setTab} />
      </div>
      <Ribbon />
      <Sheet />
      <SheetTabs />
      <StatusBar />
      <Taskbar />
    </div>
  );
}
